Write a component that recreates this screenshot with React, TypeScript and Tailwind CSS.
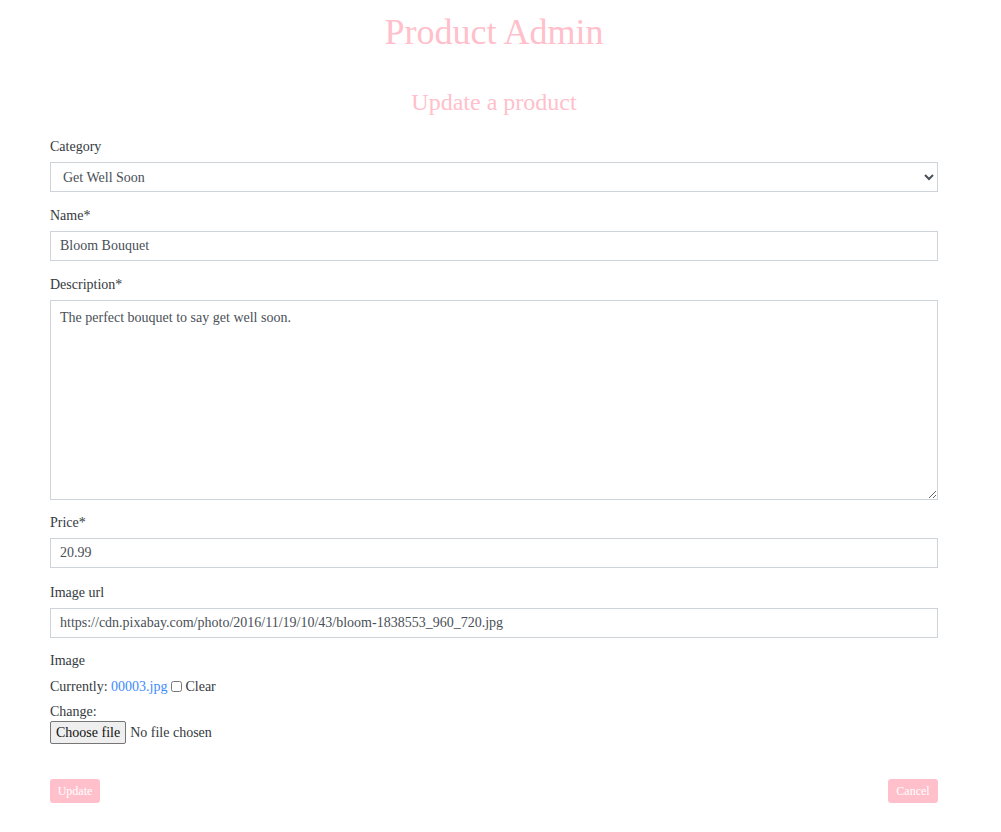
const Field = ({
  label,
  children,
  className = "mb-[12px]",
}: {
  label: string;
  children: React.ReactNode;
  className?: string;
}) => {
  return (
    <div className={"flex flex-col " + className}>
      <label className="text-[14px] leading-[21px] mb-[5px] text-[#343a40]">{label}</label>
      {children}
    </div>
  );
};

const inputCls =
  "w-full h-[30px] box-border border border-[#ced4da] bg-white px-[9px] text-[14px] text-[#495057] outline-none";

const App = () => {
  return (
    <div
      className="w-full min-h-[832px] bg-white"
      style={{ fontFamily: '"Liberation Serif", "Times New Roman", serif' }}
    >
      <div className="ml-[50px] w-[888px] pt-[11px]">
        <h1 className="text-center text-[36px] leading-[43px] text-[#ffc0cb] font-normal">
          Product Admin
        </h1>
        <h2 className="text-center text-[24px] leading-[29px] mt-[34px] text-[#ffc0cb] font-normal">
          Update a product
        </h2>
        <form className="mt-[19px]">
          <Field label="Category" className="mb-[13px]">
            <select className={inputCls + " pl-[8px]"} defaultValue="gws">
              <option value="gws">Get Well Soon</option>
              <option value="bd">Birthday</option>
              <option value="an">Anniversary</option>
            </select>
          </Field>
          <Field label="Name*" className="mb-[13px]">
            <input className={inputCls} defaultValue="Bloom Bouquet" />
          </Field>
          <Field label="Description*" className="mb-[12px]">
            <textarea
              className="w-full h-[200px] box-border border border-[#ced4da] bg-white px-[9px] py-[6px] text-[14px] leading-[21px] text-[#495057] outline-none"
              defaultValue="The perfect bouquet to say get well soon."
            />
          </Field>
          <Field label="Price*" className="mb-[14px]">
            <input className={inputCls} defaultValue="20.99" />
          </Field>
          <Field label="Image url" className="mb-[12px]">
            <input
              className={inputCls}
              defaultValue="https://cdn.pixabay.com/photo/2016/11/19/10/43/bloom-1838553_960_720.jpg"
            />
          </Field>
          <div className="flex flex-col text-[14px] leading-[21px] text-[#343a40]">
            <span className="mb-[5px]">Image</span>
            <div className="flex items-center">
              <span>Currently:&nbsp;</span>
              <a href="#" className="text-[#3d8bfd]">00003.jpg</a>
              <input type="checkbox" className="ml-[4px] mr-[3px] w-[11px] h-[11px]" />
              <span>Clear</span>
            </div>
            <span className="mt-[5px] leading-[19px]">Change:</span>
            <label className="flex items-center gap-[4px] cursor-pointer">
              <span className="h-[23px] px-[5px] box-border flex items-center border border-[#767676] rounded-[2px] bg-[#efefef] text-[#111]">
                Choose file
              </span>
              <span>No file chosen</span>
              <input type="file" className="hidden" />
            </label>
          </div>
          <div className="flex justify-between mt-[35px]">
            <button
              type="button"
              className="w-[50px] h-[24px] rounded-[3px] bg-[#ffc0cb] text-white text-[12px]"
            >
              Update
            </button>
            <button
              type="button"
              className="w-[50px] h-[24px] rounded-[3px] bg-[#ffc0cb] text-white text-[12px]"
            >
              Cancel
            </button>
          </div>
        </form>
      </div>
    </div>
  );
};

export default App;
